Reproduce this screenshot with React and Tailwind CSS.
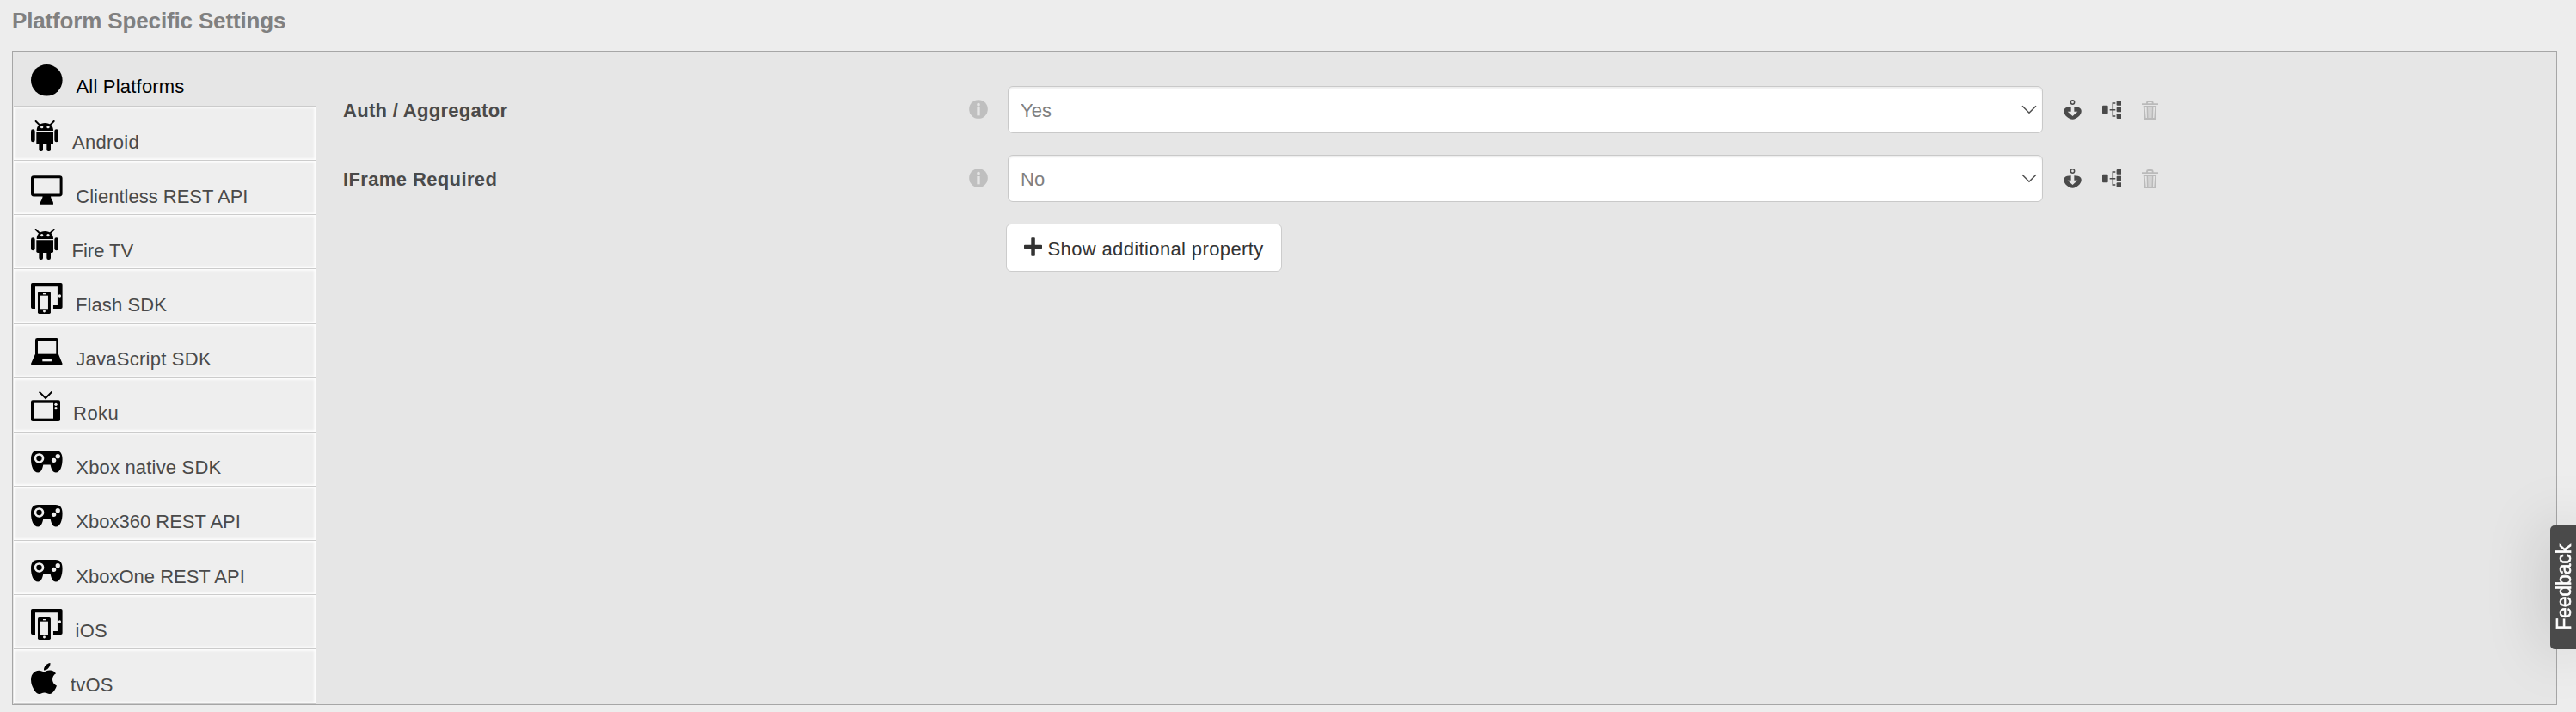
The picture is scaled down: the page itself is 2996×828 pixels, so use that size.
import React from "react";

const CircleIcon = () => (
  <svg viewBox="0 0 110 110" className="block h-[36.6px] w-[36.6px]">
    <circle cx="55" cy="55" r="55" />
  </svg>
);

const AndroidIcon = () => (
  <svg viewBox="0 0 96 108" className="block h-9 w-8">
    <path d="M17 3L31 17M80 3L66 17" stroke="#000" strokeWidth="6" strokeLinecap="round" />
    <path d="M20 36C20 20 30 9 49 9S78 20 78 36Z" />
    <circle cx="38" cy="23" r="5" fill="#eee" />
    <circle cx="60" cy="23" r="5" fill="#eee" />
    <path d="M19 40H78V79Q78 84 73 84H24Q19 84 19 79Z" />
    <rect x="0" y="31" width="14" height="45" rx="7" />
    <rect x="82" y="31" width="14" height="45" rx="7" />
    <rect x="28" y="76" width="14" height="32" rx="6" />
    <rect x="55" y="76" width="14" height="32" rx="6" />
  </svg>
);

const MonitorIcon = () => (
  <svg viewBox="0 0 110 102" className="block h-[34px] w-[36.6px]">
    <rect x="4.5" y="5" width="101" height="64" rx="5" fill="none" stroke="#000" strokeWidth="9" />
    <path d="M41 70H69C69 84 78 90 78 96V101H33V96C33 90 41 84 41 70Z" />
  </svg>
);

const DevicesIcon = () => (
  <svg viewBox="0 0 110 108" className="block h-9 w-[36.6px]">
    <path d="M5 0H105Q110 0 110 5V85Q110 90 105 90H78V78H93V13H15V90H5Q0 90 0 85V5Q0 0 5 0Z" />
    <circle cx="100.500" cy="45" r="5" fill="#eee" />
    <rect x="24" y="30" width="45" height="78" rx="5" />
    <rect x="33" y="44" width="27" height="47" fill="#eee" />
    <rect x="42" y="36" width="10" height="4" fill="#eee" />
    <circle cx="46.500" cy="99" r="4.500" fill="#eee" />
  </svg>
);

const LaptopIcon = () => (
  <svg viewBox="0 0 110 96" className="block h-8 w-[36.6px]">
    <path d="M22 0H89Q96 0 96 7V56L110 90Q110 95 105 95H5Q0 95 0 90L15 56V7Q15 0 22 0Z" />
    <rect x="24" y="9" width="64" height="47" fill="#eee" />
    <rect x="40" y="72" width="32" height="10" fill="#eee" />
  </svg>
);

const TvIcon = () => (
  <svg viewBox="0 0 102 105" className="block h-[35px] w-[34px]">
    <path d="M29 2L51 24L73 2" fill="none" stroke="#000" strokeWidth="6" />
    <rect x="0" y="31" width="102" height="74" rx="6" />
    <rect x="9" y="41" width="69" height="54" fill="#eee" />
    <circle cx="87" cy="46" r="5" fill="#eee" />
    <circle cx="87" cy="59" r="5" fill="#eee" />
  </svg>
);

const GamepadIcon = () => (
  <svg viewBox="0 0 110 77" className="block h-[25.6px] w-[36.6px]">
    <path d="M24 0H86C104 0 110 12 110 30C110 55 102 77 87 77C76 77 71 65 68 50H43C40 65 35 77 25 77C9 77 0 55 0 30C0 12 6 0 24 0Z" />
    <circle cx="28.500" cy="27" r="13.500" fill="none" stroke="#eee" strokeWidth="8" />
    <circle cx="94" cy="20" r="8" fill="#eee" />
    <circle cx="80" cy="34" r="8" fill="#eee" />
  </svg>
);

const AppleIcon = () => (
  <svg viewBox="4 32 377 448" preserveAspectRatio="none" className="block h-9 w-[30px]">
    <path d="M318.7 268.7c-.2-36.7 16.4-64.4 50-84.8-18.8-26.9-47.2-41.7-84.7-44.6-35.5-2.800-74.3 20.7-88.5 20.7-15 0-49.4-19.7-76.4-19.7C63.3 141.2 4 184.8 4 273.500q0 39.3 14.4 81.2c12.8 36.7 59 126.7 107.2 125.2 25.2-.6 43-17.9 75.8-17.9 31.8 0 48.3 17.9 76.4 17.9 48.6-.7 90.4-82.5 102.6-119.3-65.2-30.7-61.7-90-61.7-91.900zm-56.6-164.2c27.3-32.4 24.8-61.9 24-72.5-24.1 1.4-52 16.4-67.9 34.9-17.5 19.8-27.8 44.3-25.6 71.9 26.1 2 49.9-11.4 69.5-34.3z" />
  </svg>
);

const InfoIcon = () => (
  <svg viewBox="0 0 66 66" className="-mt-px h-[22px] w-[22px] shrink-0">
    <circle cx="33" cy="33" r="32.500" fill="#bfbfbf" />
    <circle cx="33" cy="17" r="5.500" fill="#e5e5e5" />
    <rect x="28" y="27" width="10" height="28" fill="#e5e5e5" />
  </svg>
);

const InheritIcon = () => (
  <svg viewBox="0 0 63 69" className="h-[23px] w-[21px] shrink-0" fill="#4a4a4a">
    <circle cx="31.500" cy="9" r="6.500" fill="none" stroke="#4a4a4a" strokeWidth="4.500" />
    <path d="M26 25C16 25 7 27 3 32C-6 46 14 68 31.500 68S69 46 60 32C56 27 47 25 37 25V41H49L31.500 57L14 41H26Z" />
  </svg>
);

const TreeIcon = () => (
  <svg viewBox="0 0 68 63" className="h-[21px] w-[22.6px] shrink-0" fill="#4a4a4a">
    <rect x="0" y="17" width="20" height="29" rx="3" />
    <path d="M26 32H46M46 9H37V54H46" fill="none" stroke="#4a4a4a" strokeWidth="4.500" />
    <rect x="50" y="0" width="18" height="17" rx="3" />
    <rect x="50" y="23" width="18" height="17" rx="3" />
    <rect x="50" y="46" width="18" height="17" rx="3" />
  </svg>
);

const TrashIcon = () => (
  <svg viewBox="0 0 57 66" className="h-[22px] w-[19px] shrink-0" fill="none" stroke="#bababa" strokeWidth="5.500">
    <path d="M0 12.500H57M18 12V7Q18 3 23 3H33Q38 3 38 7V12" />
    <path d="M8 21H48.500L45.500 63H11.500ZM19.500 20L20.500 63M28.500 20V63M37.500 20L36.500 63" />
  </svg>
);

const platforms = [
  { name: "Android", icon: AndroidIcon, row: "h-[63px]", pic: "w-[48px] pt-4", text: "pt-[30px] tracking-[0.3px]" },
  { name: "Clientless REST API", icon: MonitorIcon, row: "h-[63px]", pic: "w-[52.3px] pt-[17px]", text: "pt-[30px]" },
  { name: "Fire TV", icon: AndroidIcon, row: "h-[63px]", pic: "w-[47.5px] pt-4", text: "pt-[30px]" },
  { name: "Flash SDK", icon: DevicesIcon, row: "h-[64px]", pic: "w-[52px] pt-4", text: "pt-[30px] tracking-[0.1px]" },
  { name: "JavaScript SDK", icon: LaptopIcon, row: "h-[63px]", pic: "w-[52.3px] pt-4", text: "pt-[29px] tracking-[0.25px]" },
  { name: "Roku", icon: TvIcon, row: "h-[63px]", pic: "w-[49px] pt-[15px]", text: "pt-[29px] tracking-[0.5px]" },
  { name: "Xbox native SDK", icon: GamepadIcon, row: "h-[63px]", pic: "w-[52.3px] pt-[21px]", text: "pt-[29px] tracking-[0.18px]" },
  { name: "Xbox360 REST API", icon: GamepadIcon, row: "h-[63px]", pic: "w-[52.3px] pt-[21px]", text: "pt-[29px]" },
  { name: "XboxOne REST API", icon: GamepadIcon, row: "h-[63px]", pic: "w-[52.3px] pt-[22px]", text: "pt-[30px]" },
  { name: "iOS", icon: DevicesIcon, row: "h-[63px]", pic: "w-[51.6px] pt-4", text: "pt-[30px] tracking-[0.2px]" },
  { name: "tvOS", icon: AppleIcon, row: "h-[65px] border-b", pic: "w-[46px] pt-4", text: "pt-[30px] tracking-[0.2px]" },
];

const PropertyRow = ({ label, value, spacing }) => (
  <div className="flex h-[55px] items-center">
    <div className={`w-[728px] pt-0.5 font-bold text-[#4a4a4a] ${spacing}`}>{label}</div>
    <InfoIcon />
    <div className="ml-[23px] flex h-[55px] w-[1204px] items-center justify-between rounded-[6px] border border-[#c9c9c9] bg-white pl-3.5 pr-[6px] text-[#808080] shadow-[inset_0_2px_2px_rgba(0,0,0,0.07)]">
      <span className="pt-0.5">{value}</span>
      <svg viewBox="0 0 18 11" className="h-[11px] w-[18px]" fill="none" stroke="#4f4f4f" strokeWidth="1.500">
        <path d="M1 1.300L9 9.300L17 1.300" />
      </svg>
    </div>
    <div className="ml-6 flex items-center">
      <InheritIcon />
      <div className="ml-[23.6px] flex"><TreeIcon /></div>
      <div className="ml-[23.6px] flex"><TrashIcon /></div>
    </div>
  </div>
);

export default function App() {
  return (
    <div className="h-[828px] w-full overflow-hidden bg-[#ededed] pl-3.5 pr-[22px] font-['Liberation_Sans',Arial,sans-serif] text-[22px] leading-6">
      <h1 className="h-[59px] pt-2.5 text-[26px] font-bold leading-[29px] tracking-[-0.15px] text-[#808080]">
        Platform Specific Settings
      </h1>
      <div className="flex h-[761px] border border-[#a6a6a6] bg-[#e6e6e6]">
        <nav className="w-[353px] pl-px">
          <div className="flex h-[63px] items-start pl-5 text-black">
            <div className="w-[52.5px] pt-[15px]"><CircleIcon /></div>
            <span className="pt-[29px] tracking-[0.2px]">All Platforms</span>
          </div>
          {platforms.map(({ name, icon: Icon, row, pic, text }) => (
            <div
              key={name}
              className={`flex items-start border-r border-t border-[#cbcbcb] bg-[#eee] pl-5 text-[#4a4a4a] shadow-[inset_0_0_3px_1.5px_#fff] ${row}`}
            >
              <div className={`shrink-0 ${pic}`}><Icon /></div>
              <span className={`whitespace-nowrap ${text}`}>{name}</span>
            </div>
          ))}
        </nav>
        <main className="flex flex-1 flex-col gap-[25px] pl-[31px] pt-10">
          <PropertyRow label="Auth / Aggregator" value="Yes" spacing="tracking-[0.3px]" />
          <PropertyRow label="IFrame Required" value="No" spacing="tracking-[0.38px]" />
          <button className="ml-[771px] flex h-14 w-[321px] items-center whitespace-nowrap rounded-[6px] border border-[#ccc] bg-white pl-5 text-[#333]">
            <svg viewBox="0 0 21 22" className="-mt-0.5 h-[22px] w-[21px] shrink-0" fill="#333">
              <path d="M8.300 1.200Q8.300.3 9.200.3H11.900Q12.800.3 12.800 1.200V8.700H20Q21 8.700 21 9.600V12.200Q21 13.200 20 13.200H12.800V20.800Q12.800 21.800 11.900 21.800H9.200Q8.300 21.800 8.300 20.800V13.200H1Q0 13.200 0 12.200V9.600Q0 8.700 1 8.700H8.300Z" />
            </svg>
            <span className="ml-[6.500px] pt-1 tracking-[0.37px]">Show additional property</span>
          </button>
        </main>
      </div>
      <div className="fixed right-0 top-[611px] flex h-36 w-[30px] items-center justify-center rounded-l-[5px] bg-[#4a4a4a] pl-[3px] shadow-[0_0_70px_rgba(0,0,0,0.22)]">
        <span className="rotate-180 text-[23px] leading-[27px] tracking-[-0.15px] text-white [-webkit-text-stroke:0.6px_white] [writing-mode:vertical-rl]">
          Feedback
        </span>
      </div>
    </div>
  );
}
